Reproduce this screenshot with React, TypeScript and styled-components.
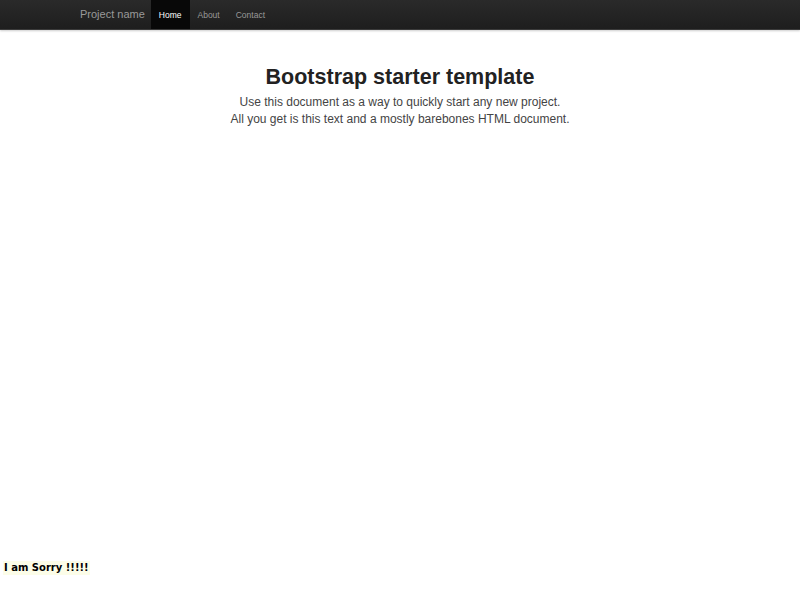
import React from 'react'
import styled, { createGlobalStyle } from 'styled-components'

const GlobalStyle = createGlobalStyle`
  html, body {
    margin: 0;
    padding: 0;
    background: #ffffff;
  }
  body {
    font-family: "Liberation Sans", Arial, sans-serif;
    color: #333333;
  }
`

const Page = styled.div`
  display: flex;
  flex-direction: column;
  min-height: 600px;
`

const Navbar = styled.div`
  height: 29px;
  background: linear-gradient(#2a2a2a, #1e1e1e);
  border-bottom: 1px solid #3a3a3a;
  box-shadow: 0 1px 2px rgba(0, 0, 0, 0.2);
`

const NavInner = styled.div`
  width: 640px;
  margin: 0 auto;
  display: flex;
  align-items: stretch;
  height: 100%;
`

const Brand = styled.a`
  display: flex;
  align-items: center;
  padding: 0 6px 1px 0;
  font-size: 11px;
  color: #999999;
  text-decoration: none;
`

const NavList = styled.ul`
  display: flex;
  list-style: none;
  margin: 0;
  padding: 0;
`

const NavItem = styled.li<{ $active?: boolean }>`
  display: flex;
  align-items: center;
  padding: 0 8px;
  font-size: 8.5px;
  background: ${({ $active }) => ($active ? '#080808' : 'transparent')};
  color: ${({ $active }) => ($active ? '#ffffff' : '#999999')};
`

const Main = styled.div`
  flex: 1;
  display: flex;
  flex-direction: column;
  align-items: center;
  padding-top: 33px;
`

const Title = styled.h1`
  margin: 0 0 3px;
  font-size: 21.5px;
  line-height: 28px;
  font-weight: bold;
  color: #222222;
`

const Lead = styled.p`
  margin: 0;
  font-size: 12px;
  line-height: 17px;
  text-align: center;
  color: #444444;
`

const Footer = styled.div`
  padding: 0 0 25px 3px;
`

const Sorry = styled.span`
  display: inline-block;
  padding: 0 1px;
  background: #fcfde8;
  font-family: Tahoma, "DejaVu Sans", sans-serif;
  font-weight: bold;
  font-size: 10px;
  line-height: 14px;
  color: #000000;
`

export default function App() {
  return (
    <>
      <GlobalStyle />
      <Page>
        <Navbar>
          <NavInner>
            <Brand href="#">Project name</Brand>
            <NavList>
              <NavItem $active>Home</NavItem>
              <NavItem>About</NavItem>
              <NavItem>Contact</NavItem>
            </NavList>
          </NavInner>
        </Navbar>
        <Main>
          <Title>Bootstrap starter template</Title>
          <Lead>
            Use this document as a way to quickly start any new project.
            <br />
            All you get is this text and a mostly barebones HTML document.
          </Lead>
        </Main>
        <Footer>
          <Sorry>I am Sorry !!!!!</Sorry>
        </Footer>
      </Page>
    </>
  )
}
